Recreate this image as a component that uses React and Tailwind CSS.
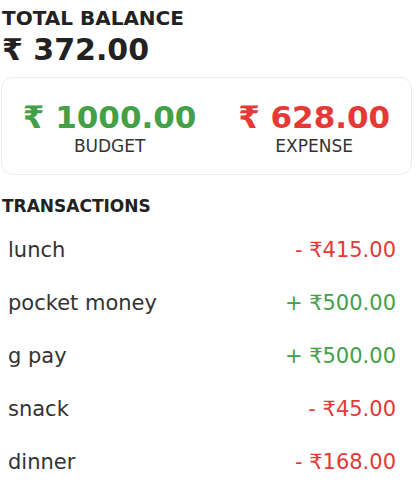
export default function App() {
  const tx = [
    { name: "lunch", amt: "- ₹415.00", pos: false },
    { name: "pocket money", amt: "+ ₹500.00", pos: true },
    { name: "g pay", amt: "+ ₹500.00", pos: true },
    { name: "snack", amt: "- ₹45.00", pos: false },
    { name: "dinner", amt: "- ₹168.00", pos: false },
  ];
  return (
    <div className="w-[420px] h-[500px] bg-white overflow-hidden text-[#222]" style={{ fontFamily: "'DejaVu Sans', 'Liberation Sans', sans-serif" }}>
      <div className="px-[2px] pt-[6px]">
        <div className="text-[20px] font-bold leading-[24px] text-[#222]">TOTAL BALANCE</div>
        <div className="mt-[2px] text-[30px] font-bold leading-[36px] text-[#222]">₹ 372.00</div>
      </div>
      <div className="ml-[1px] mt-[9px] w-[411px] h-[98px] border border-[#ececec] rounded-[12px] flex items-center justify-around pt-[4px]">
        <div className="flex flex-col items-center">
          <div className="text-[31px] font-bold leading-[36px] text-[#43a047]">₹ 1000.00</div>
          <div className="text-[17px] leading-[22px] text-[#333]">BUDGET</div>
        </div>
        <div className="flex flex-col items-center">
          <div className="text-[31px] font-bold leading-[36px] text-[#e53935]">₹ 628.00</div>
          <div className="text-[17px] leading-[22px] text-[#333]">EXPENSE</div>
        </div>
      </div>
      <div className="px-[2px] mt-[21px] text-[17px] font-bold leading-[20px] text-[#222]">TRANSACTIONS</div>
      <div className="mt-[8px] pl-[8px] pr-[24px] flex flex-col">
        {tx.map((t, i) => (
          <div key={i} className="h-[53px] flex items-center justify-between text-[21px]">
            <span className="text-[#333]">{t.name}</span>
            <span className={t.pos ? "text-[#43a047]" : "text-[#e53935]"}>{t.amt}</span>
          </div>
        ))}
      </div>
    </div>
  );
}
